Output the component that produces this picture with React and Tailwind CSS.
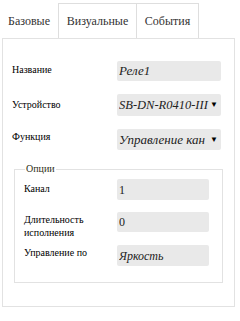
import React from 'react';

function Field({ value, select, italic = true, width, size = 'text-[13px]' }) {
  return (
    <div className={`flex items-center bg-[#e9e9e9] rounded-[2px] pl-[2px] pr-[3px] overflow-hidden ${width}`}>
      <span className={`flex-1 whitespace-nowrap overflow-hidden text-[#222] ${size} ${italic ? 'italic' : ''}`}>{value}</span>
      {select && <span className="text-[8px] text-black ml-[1px]">▼</span>}
    </div>
  );
}

export default function App() {
  return (
    <div className="w-[240px] h-[321px] bg-white text-black font-['Liberation_Serif',serif]">
      <div className="flex pt-[3px] h-[38px]">
        <div className="w-[58px] flex items-center justify-center text-[12px] text-[#333] pt-[1px]">Базовые</div>
        <div className="w-[79px] flex items-center justify-center text-[12px] text-[#333] border border-b-0 border-[#dedede]">Визуальные</div>
        <div className="w-[62px] flex items-center justify-center text-[12px] text-[#333] border border-b-0 border-l-0 border-[#dedede]">События</div>
      </div>
      <div className="ml-[2px] w-[233px] h-[269px] border border-[#e2e2e2] pl-[9px] pr-[13px] pt-[22px]">
        <div className="flex items-start h-[20px]">
          <div className="w-[105px] text-[10px] pt-[1px]">Название</div>
          <Field value="Реле1" width="w-[104px] h-[20px]" />
        </div>
        <div className="flex items-start h-[22px] mt-[13px]">
          <div className="w-[105px] text-[10px] pt-[3px]">Устройство</div>
          <Field value="SB-DN-R0410-III" select size="text-[12.5px]" width="w-[104px] h-[22px]" />
        </div>
        <div className="flex items-start h-[21px] mt-[13px]">
          <div className="w-[105px] text-[10px] pt-[0px]">Функция</div>
          <Field value="Управление кан" select width="w-[104px] h-[21px]" />
        </div>
        <fieldset className="mt-[13px] ml-[2px] w-[208px] h-[120px] border border-[#e2e2e2] pl-[9px] pr-[13px]">
          <legend className="ml-[1px] px-[1px] text-[10px] text-[#2e2e14] leading-[12px]">Опции</legend>
          <div className="flex items-start h-[21px] mt-[4px]">
            <div className="w-[93px] text-[10px] pt-[2px]">Канал</div>
            <Field value="1" italic={false} size="text-[12px]" width="w-[92px] h-[21px]" />
          </div>
          <div className="flex items-start h-[20px] mt-[12px]">
            <div className="w-[93px] text-[10px] leading-[13px] pt-[1px]">Длительность исполнения</div>
            <Field value="0" italic={false} size="text-[12px]" width="w-[92px] h-[20px]" />
          </div>
          <div className="flex items-start h-[21px] mt-[13px]">
            <div className="w-[93px] text-[10px] pt-[0px]">Управление по</div>
            <Field value="Яркость" size="text-[12px]" width="w-[92px] h-[21px]" />
          </div>
        </fieldset>
      </div>
    </div>
  );
}
